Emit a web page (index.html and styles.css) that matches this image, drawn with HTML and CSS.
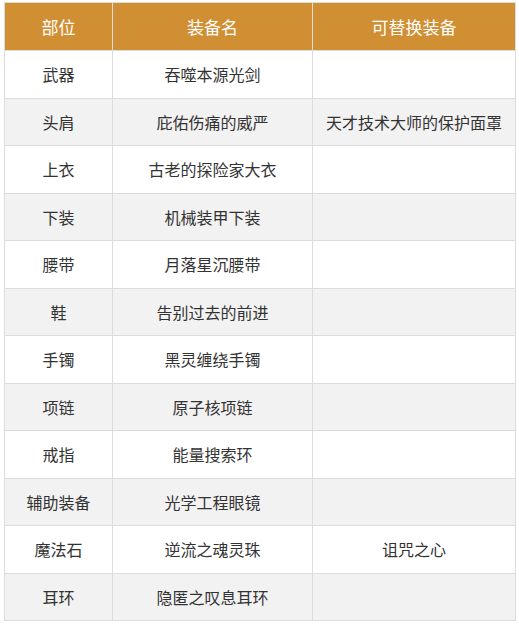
FILE: index.html
```html
<!DOCTYPE html>
<html lang="zh">
<head>
<meta charset="utf-8">
<link rel="stylesheet" href="styles.css">
</head>
<body>
<table class="gear">
  <colgroup>
    <col class="c1"><col class="c2"><col class="c3">
  </colgroup>
  <thead>
    <tr><th>部位</th><th>装备名</th><th>可替换装备</th></tr>
  </thead>
  <tbody>
    <tr><td>武器</td><td>吞噬本源光剑</td><td></td></tr>
    <tr><td>头肩</td><td>庇佑伤痛的威严</td><td>天才技术大师的保护面罩</td></tr>
    <tr><td>上衣</td><td>古老的探险家大衣</td><td></td></tr>
    <tr><td>下装</td><td>机械装甲下装</td><td></td></tr>
    <tr><td>腰带</td><td>月落星沉腰带</td><td></td></tr>
    <tr><td>鞋</td><td>告别过去的前进</td><td></td></tr>
    <tr><td>手镯</td><td>黑灵缠绕手镯</td><td></td></tr>
    <tr><td>项链</td><td>原子核项链</td><td></td></tr>
    <tr><td>戒指</td><td>能量搜索环</td><td></td></tr>
    <tr><td>辅助装备</td><td>光学工程眼镜</td><td></td></tr>
    <tr><td>魔法石</td><td>逆流之魂灵珠</td><td>诅咒之心</td></tr>
    <tr><td>耳环</td><td>隐匿之叹息耳环</td><td></td></tr>
  </tbody>
</table>
</body>
</html>
```
FILE: styles.css
```css
html, body {
  margin: 0;
  padding: 0;
  background: #ffffff;
}
body {
  padding: 2px 4px 0 4px;
  font-family: "Noto Sans CJK SC", "Noto Sans", sans-serif;
}
.gear {
  border-collapse: collapse;
  width: 511px;
  table-layout: fixed;
}
.c1 { width: 108px; }
.c2 { width: 200px; }
.c3 { width: 203px; }
.gear th, .gear td {
  border: 1px solid #dcdcdc;
  text-align: center;
  vertical-align: middle;
  padding: 0;
  font-size: 16px;
  font-weight: normal;
}
.gear thead tr { height: 48px; }
.gear th {
  background: #d08f33;
  color: #ffffff;
  font-size: 17px;
}
.gear tbody tr { height: 47.5px; }
.gear td { color: #333333; }
.gear tbody tr:nth-child(even) td { background: #f2f2f2; }
```
